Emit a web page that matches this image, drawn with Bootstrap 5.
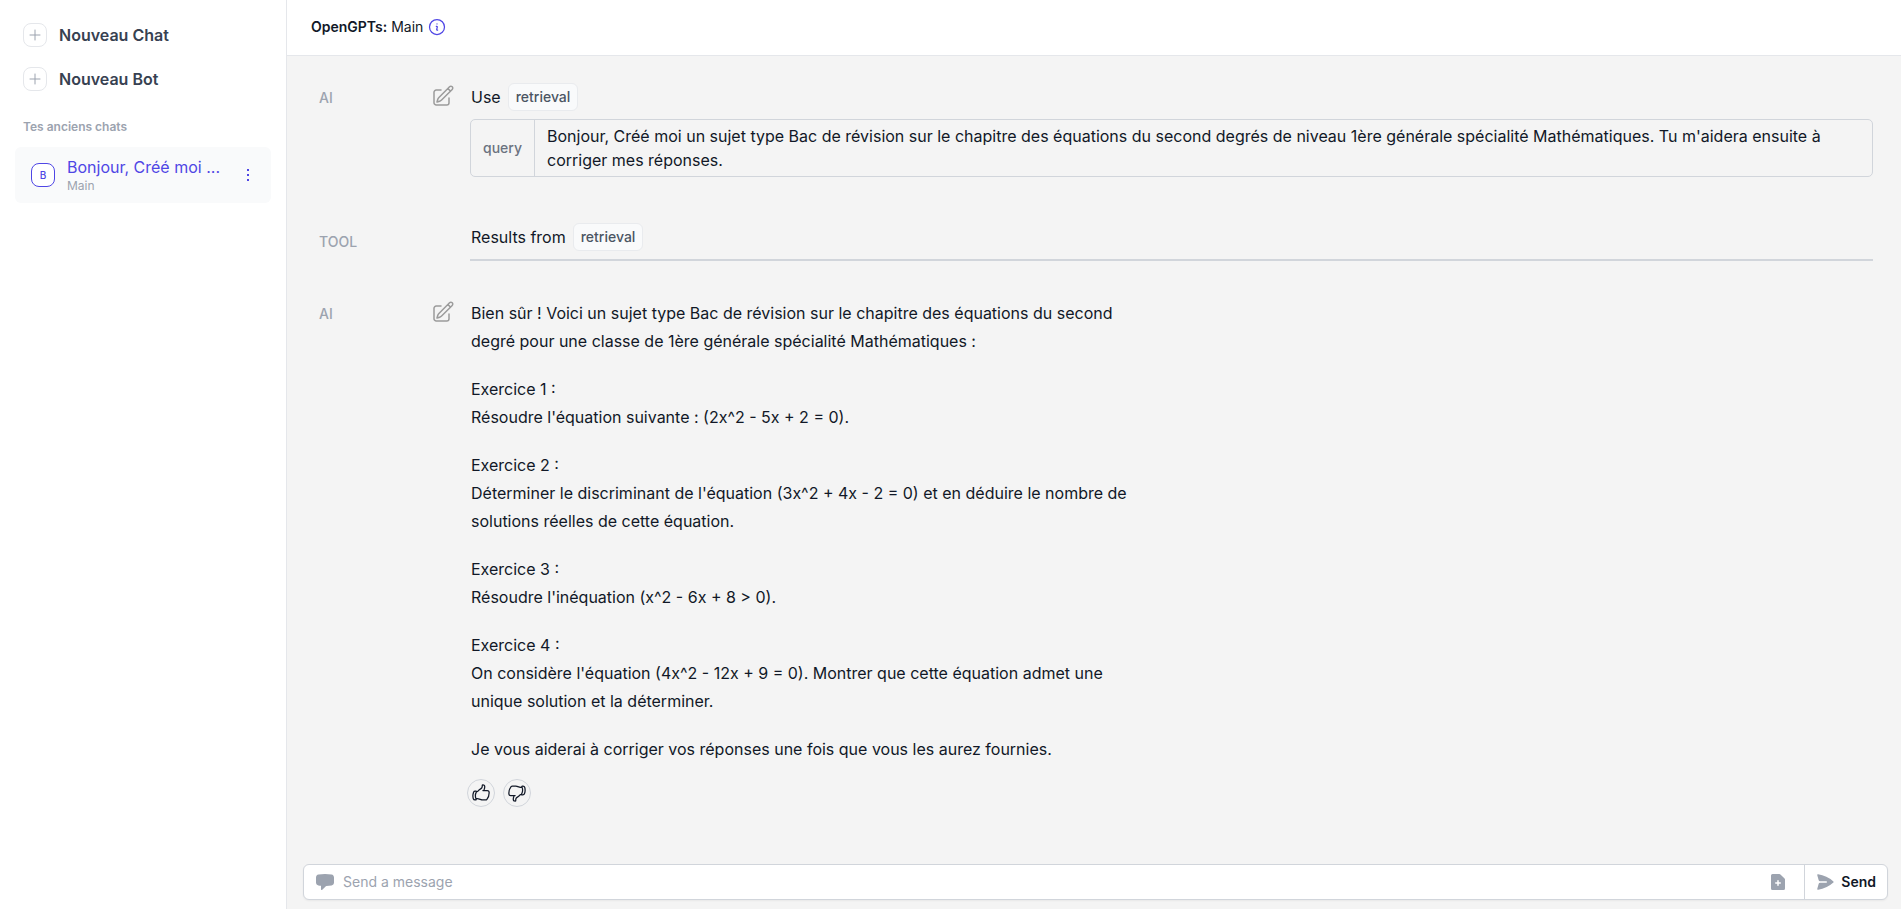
<!DOCTYPE html>
<html lang="fr">
<head>
<meta charset="utf-8">
<meta name="viewport" content="width=device-width, initial-scale=1">
<title>OpenGPTs</title>
<link href="https://cdn.jsdelivr.net/npm/bootstrap@5.3.0/dist/css/bootstrap.min.css" rel="stylesheet">
<style>
  body { font-family: Inter, "Open Sans", sans-serif; font-size: 16px; line-height: 24px; color: #111827; background: #f4f4f4; }
  svg { display: block; flex: none; }
  .outline-icon { fill: none; stroke: currentColor; stroke-width: 1.5; stroke-linecap: round; stroke-linejoin: round; }
  .side-panel { width: 287px; background: #fff; border-right: 1px solid #e5e7eb; padding: 15px; }
  .side-link { color: #374151; font-weight: 600; padding: 8px; gap: 12px; line-height: 24px; margin-bottom: 4px; }
  .square-icon { width: 24px; height: 24px; border: 1px solid #e5e7eb; border-radius: 8px; color: #9ca3af; background: #fff; flex: none; }
  .side-heading { font-size: 12px; line-height: 24px; font-weight: 600; color: #9ca3af; padding: 0 8px; margin: 16px 0 8px; }
  .chat-item { background: #f9fafb; border-radius: 6px; padding: 8px 16px; min-height: 56px; }
  .chat-link { color: #4f46e5; gap: 12px; min-width: 0; }
  .chat-link .square-icon { border-color: #4f46e5; color: #4f46e5; font-size: 10px; font-weight: 500; }
  .chat-name { line-height: 22px; }
  .chat-bot { font-size: 12px; line-height: 16px; color: #9ca3af; }
  .plain-btn { border: 0; background: none; padding: 0; color: inherit; }
  .top-bar { height: 56px; background: #fff; border-bottom: 1px solid #e5e7eb; padding: 0 24px 1px; font-size: 14px; }
  .top-bar button, .chat-item > button { color: #4f46e5; }
  .messages { padding: 27px 28px 0 32px; }
  .message-call { margin-bottom: 46px; }
  .message-result { margin-bottom: 38px; }
  .role-name { width: 112px; font-size: 14px; line-height: 24px; font-weight: 500; color: #9ca3af; padding-top: 3px; flex: none; }
  .message-result .role-name { padding-top: 7px; }
  .role-edit { width: 24px; margin-right: 15px; padding-top: 1px; color: #9b9b9b; flex: none; }
  .tool-line { gap: 7px; line-height: 28px; padding-left: 1px; }
  .tool-tag { border: 1px solid #e9ebee; border-radius: 6px; background: #f9fafb; color: #4b5563; font-size: 14px; line-height: 20px; font-weight: 500; padding: 3px 7px; }
  .args { border: 1px solid #d1d5db; border-radius: 5px; border-collapse: separate; border-spacing: 0; width: 100%; margin-top: 8px; }
  .args th { font-size: 14px; font-weight: 500; color: #6b7280; padding: 4px 12px; border-right: 1px solid #d1d5db; }
  .args td { padding: 4px 12px; width: 100%; }
  .result-rule { border-top: 2px solid #d1d5db; margin-top: 8px; }
  .answer { max-width: 658px; line-height: 28px; padding-left: 1px; }
  .answer p { margin: 0 0 20px; }
  .vote-row { gap: 8px; margin: -4px 0 0 -3px; }
  .vote-btn { width: 28px; height: 28px; border: 1px solid #d1d5db; border-radius: 50%; background: none; color: #111827; padding: 0; }
  .composer-wrap { padding: 0 13px 9px 16px; }
  .composer { height: 36px; background: #fff; border: 1px solid #d1d5db; border-radius: 6px; box-shadow: 0 1px 2px rgba(0,0,0,.05); color: #9ca3af; }
  .composer label { padding: 0 8px 0 11px; }
  .composer input { border: 0; outline: 0; background: none; font-size: 14px; line-height: 20px; color: #111827; min-width: 0; padding: 0; }
  .composer input::placeholder { color: #9ca3af; opacity: 1; }
  .send-btn { border: 0; border-left: 1px solid #d1d5db; background: none; color: #9ca3af; font-size: 14px; font-weight: 600; padding: 0 11px 0 10px; gap: 6px; }
  .send-btn span { color: #111827; }
</style>
</head>
<body>
<div class="d-flex min-vh-100">
  <aside class="side-panel flex-shrink-0">
    <nav>
      <a href="#" class="side-link d-flex align-items-center text-decoration-none">
        <span class="square-icon d-flex align-items-center justify-content-center"><svg class="outline-icon" width="16" height="16" viewBox="0 0 24 24"><path d="M12 4.500v15m7.500-7.500h-15"/></svg></span>Nouveau Chat</a>
      <a href="#" class="side-link d-flex align-items-center text-decoration-none">
        <span class="square-icon d-flex align-items-center justify-content-center"><svg class="outline-icon" width="16" height="16" viewBox="0 0 24 24"><path d="M12 4.500v15m7.500-7.500h-15"/></svg></span>Nouveau Bot</a>
      <h2 class="side-heading">Tes anciens chats</h2>
      <div class="chat-item d-flex align-items-center justify-content-between">
        <a href="#" class="chat-link d-flex align-items-center text-decoration-none">
          <span class="square-icon d-flex align-items-center justify-content-center">B</span>
          <span class="d-flex flex-column"><span class="chat-name">Bonjour, Créé moi ...</span><span class="chat-bot">Main</span></span>
        </a>
        <button type="button" class="plain-btn" aria-label="Options"><svg width="14" height="16" viewBox="0 0 14 16" fill="currentColor"><path d="M6 2h2v2H6zM6 7h2v2H6zM6 12h2v2H6z"/></svg></button>
      </div>
    </nav>
  </aside>
  <div class="d-flex flex-column flex-grow-1">
    <header class="top-bar d-flex align-items-center">
      <div><span class="fw-semibold">OpenGPTs:</span> Main</div>
      <button type="button" class="plain-btn ms-1" aria-label="Informations"><svg class="outline-icon" width="20" height="20" viewBox="0 0 24 24"><path d="m11.250 11.250.041-.02a.75.75 0 0 1 1.063.852l-.708 2.836a.75.75 0 0 0 1.063.853l.041-.021M21 12a9 9 0 1 1-18 0 9 9 0 0 1 18 0Zm-9-3.750h.008v.008H12V8.250Z"/></svg></button>
    </header>
    <main class="messages flex-grow-1">
      <section class="message-call d-flex">
        <div class="role-name">AI</div>
        <div class="role-edit"><button type="button" class="plain-btn" aria-label="Modifier"><svg class="outline-icon" width="24" height="24" viewBox="0 0 24 24"><path d="m16.862 4.487 1.687-1.688a1.875 1.875 0 1 1 2.652 2.652L10.582 16.070a4.500 4.500 0 0 1-1.897 1.130L6 18l.8-2.685a4.500 4.500 0 0 1 1.130-1.897l8.932-8.931Zm0 0L19.500 7.125M18 14v4.750A2.250 2.250 0 0 1 15.750 21H5.250A2.250 2.250 0 0 1 3 18.750V8.250A2.250 2.250 0 0 1 5.250 6H10"/></svg></button></div>
        <div class="flex-grow-1">
          <div class="tool-line d-flex align-items-center">Use <span class="tool-tag">retrieval</span></div>
          <table class="args"><tbody><tr><th scope="row">query</th><td>Bonjour, Créé moi un sujet type Bac de révision sur le chapitre des équations du second degrés de niveau 1ère générale spécialité Mathématiques. Tu m'aidera ensuite à corriger mes réponses.</td></tr></tbody></table>
        </div>
      </section>
      <section class="message-result d-flex">
        <div class="role-name">TOOL</div>
        <div class="role-edit"></div>
        <div class="flex-grow-1">
          <div class="tool-line d-flex align-items-center">Results from <span class="tool-tag">retrieval</span></div>
          <div class="result-rule"></div>
        </div>
      </section>
      <section class="d-flex">
        <div class="role-name">AI</div>
        <div class="role-edit"><button type="button" class="plain-btn" aria-label="Modifier"><svg class="outline-icon" width="24" height="24" viewBox="0 0 24 24"><path d="m16.862 4.487 1.687-1.688a1.875 1.875 0 1 1 2.652 2.652L10.582 16.070a4.500 4.500 0 0 1-1.897 1.130L6 18l.8-2.685a4.500 4.500 0 0 1 1.130-1.897l8.932-8.931Zm0 0L19.500 7.125M18 14v4.750A2.250 2.250 0 0 1 15.750 21H5.250A2.250 2.250 0 0 1 3 18.750V8.250A2.250 2.250 0 0 1 5.250 6H10"/></svg></button></div>
        <div class="flex-grow-1">
          <div class="answer">
            <p>Bien sûr ! Voici un sujet type Bac de révision sur le chapitre des équations du second degré pour une classe de 1ère générale spécialité Mathématiques :</p>
            <p>Exercice 1 :<br>Résoudre l'équation suivante : (2x^2 - 5x + 2 = 0).</p>
            <p>Exercice 2 :<br>Déterminer le discriminant de l'équation (3x^2 + 4x - 2 = 0) et en déduire le nombre de solutions réelles de cette équation.</p>
            <p>Exercice 3 :<br>Résoudre l'inéquation (x^2 - 6x + 8 &gt; 0).</p>
            <p>Exercice 4 :<br>On considère l'équation (4x^2 - 12x + 9 = 0). Montrer que cette équation admet une unique solution et la déterminer.</p>
            <p>Je vous aiderai à corriger vos réponses une fois que vous les aurez fournies.</p>
          </div>
          <div class="vote-row d-flex">
            <button type="button" class="vote-btn d-flex align-items-center justify-content-center" aria-label="Bonne réponse"><svg class="outline-icon" width="20" height="20" viewBox="0 0 24 24"><path d="M6.633 10.500c.806 0 1.533-.446 2.031-1.080a9.041 9.041 0 0 1 2.861-2.400c.723-.384 1.350-.956 1.653-1.715a4.498 4.498 0 0 0 .322-1.672V3a.75.75 0 0 1 .75-.75A2.250 2.250 0 0 1 16.500 4.500c0 1.152-.260 2.243-.723 3.218-.266.558.107 1.282.725 1.282h3.126c1.026 0 1.945.694 2.054 1.715.045.422.068.850.068 1.285a11.950 11.950 0 0 1-2.649 7.521c-.388.482-.987.729-1.605.729H13.480c-.483 0-.964-.078-1.423-.230l-3.114-1.040a4.501 4.501 0 0 0-1.423-.230H5.904M14.250 9h2.250M5.904 18.750c.083.205.173.405.270.602.197.400-.078.898-.523.898h-.908c-.889 0-1.713-.518-1.972-1.368a12 12 0 0 1-.521-3.507c0-1.553.295-3.036.831-4.398C3.387 10.203 4.167 9.750 5 9.750h1.053c.472 0 .745.556.500.960a8.958 8.958 0 0 0-1.302 4.665c0 1.194.232 2.333.654 3.375Z"/></svg></button>
            <button type="button" class="vote-btn d-flex align-items-center justify-content-center" aria-label="Mauvaise réponse"><svg class="outline-icon" width="20" height="20" viewBox="0 0 24 24"><path transform="rotate(180 12 12)" d="M6.633 10.500c.806 0 1.533-.446 2.031-1.080a9.041 9.041 0 0 1 2.861-2.400c.723-.384 1.350-.956 1.653-1.715a4.498 4.498 0 0 0 .322-1.672V3a.75.75 0 0 1 .75-.75A2.250 2.250 0 0 1 16.500 4.500c0 1.152-.260 2.243-.723 3.218-.266.558.107 1.282.725 1.282h3.126c1.026 0 1.945.694 2.054 1.715.045.422.068.850.068 1.285a11.950 11.950 0 0 1-2.649 7.521c-.388.482-.987.729-1.605.729H13.480c-.483 0-.964-.078-1.423-.230l-3.114-1.040a4.501 4.501 0 0 0-1.423-.230H5.904M14.250 9h2.250M5.904 18.750c.083.205.173.405.270.602.197.400-.078.898-.523.898h-.908c-.889 0-1.713-.518-1.972-1.368a12 12 0 0 1-.521-3.507c0-1.553.295-3.036.831-4.398C3.387 10.203 4.167 9.750 5 9.750h1.053c.472 0 .745.556.500.960a8.958 8.958 0 0 0-1.302 4.665c0 1.194.232 2.333.654 3.375Z"/></svg></button>
          </div>
        </div>
      </section>
    </main>
    <form class="composer-wrap" onsubmit="return false">
      <div class="composer d-flex align-items-stretch">
        <label for="message" class="d-flex align-items-center"><svg width="20" height="20" viewBox="0 0 20 20" fill="currentColor" aria-label="Message"><path d="M3.430 2.524A41.290 41.290 0 0 1 10 2c2.236 0 4.430.180 6.570.524 1.437.231 2.430 1.490 2.430 2.902v5.148c0 1.413-.993 2.670-2.430 2.902a41.202 41.202 0 0 1-5.183.501.78.78 0 0 0-.528.224l-3.579 3.580A.75.75 0 0 1 6 17.250v-3.443a41.033 41.033 0 0 1-2.570-.330C1.993 13.244 1 11.986 1 10.573V5.426c0-1.413.993-2.670 2.430-2.902Z"/></svg></label>
        <input type="text" id="message" class="flex-grow-1" placeholder="Send a message">
        <button type="button" class="plain-btn px-3" aria-label="Joindre un fichier"><svg width="20" height="20" viewBox="0 0 20 20" fill="currentColor" fill-rule="evenodd"><path d="M4.500 2A1.500 1.500 0 0 0 3 3.500v13A1.500 1.500 0 0 0 4.500 18h11a1.500 1.500 0 0 0 1.500-1.500V7.621a1.500 1.500 0 0 0-.440-1.060l-4.120-4.122A1.500 1.500 0 0 0 11.378 2H4.500ZM10 8a.75.75 0 0 1 .75.75v1.500h1.500a.75.75 0 0 1 0 1.500h-1.500v1.500a.75.75 0 0 1-1.500 0v-1.500h-1.500a.75.75 0 0 1 0-1.500h1.500v-1.500A.75.75 0 0 1 10 8Z"/></svg></button>
        <button type="submit" class="send-btn d-flex align-items-center"><svg width="20" height="20" viewBox="0 0 20 20" fill="currentColor"><path d="M3.105 2.289a.75.75 0 0 0-.826.950l1.414 4.925A1.500 1.500 0 0 0 5.135 9.250h6.115a.75.75 0 0 1 0 1.500H5.135a1.500 1.500 0 0 0-1.442 1.086l-1.414 4.926a.75.75 0 0 0 .826.950 28.896 28.896 0 0 0 15.293-7.154.75.75 0 0 0 0-1.115A28.897 28.897 0 0 0 3.105 2.289Z"/></svg><span>Send</span></button>
      </div>
    </form>
  </div>
</div>
<script src="https://cdn.jsdelivr.net/npm/bootstrap@5.3.0/dist/js/bootstrap.bundle.min.js"></script>
</body>
</html>
